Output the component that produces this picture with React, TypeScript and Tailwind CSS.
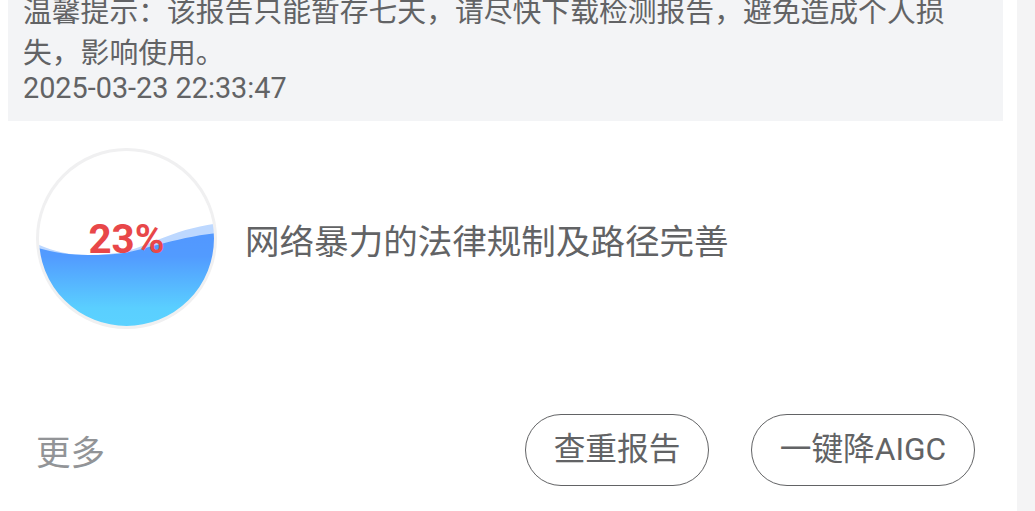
function WaterGauge({ value }: { value: number }) {
  return (
    <div className="grid h-[181px] w-[181px] shrink-0 place-items-center">
      <svg viewBox="0 0 181 181" className="col-start-1 row-start-1 h-[181px] w-[181px]">
        <defs>
          <linearGradient id="water" x1="0" y1="85" x2="0" y2="179" gradientUnits="userSpaceOnUse">
            <stop offset="0.05" stopColor="#5298ff" />
            <stop offset="0.25" stopColor="#529bff" />
            <stop offset="0.8" stopColor="#5acfff" />
            <stop offset="1" stopColor="#5bd2ff" />
          </linearGradient>
          <clipPath id="bowl">
            <circle cx="90.5" cy="90.5" r="88.5" />
          </clipPath>
        </defs>
        <circle cx="90.5" cy="90.5" r="89" fill="#fff" />
        <g clipPath="url(#bowl)">
          <path
            d="M0 95.5 C17 103.5 34 107 52 107 C66 107 79 106 92 102.8 C103 100 112 95.5 122 91.8 C140 84.5 160 78 181 75.5 V181 H0 Z"
            fill="#bdd8ff"
          />
          <path
            d="M0 99.5 C16 104.5 34 107 52 107 C66 107 79 106.5 92 104.2 C102 102.5 112 99 122 96.8 C140 92 160 87 181 85 V181 H0 Z"
            fill="url(#water)"
          />
        </g>
        <circle cx="90.5" cy="90.5" r="89" fill="none" stroke="#f0f0f1" strokeWidth="3" />
      </svg>
      <span className="col-start-1 row-start-1 pt-[3px] text-[40.3px] leading-none font-bold text-[#e84749]">
        {value}%
      </span>
    </div>
  );
}

function PillButton({ label, width }: { label: string; width: string }) {
  return (
    <button
      className={`${width} h-[72px] rounded-full border border-[#626365] text-center text-[31.68px] leading-none whitespace-nowrap text-[#626365]`}
    >
      {label}
    </button>
  );
}

export default function App() {
  return (
    <div className="h-[511px] overflow-hidden bg-[#f4f4f5] pr-[18px] font-[Roboto,'Noto_Sans_CJK_SC',sans-serif] text-[#626365]">
      <main className="flex h-full flex-col bg-white pl-2">
        <section className="flex h-[121px] w-[995px] shrink-0 flex-col justify-end bg-[#f3f4f6] pb-[17px] pl-[15px] text-[28.8px]">
          <p className="leading-[40.5px]">
            温馨提示：该报告只能暂存七天，请尽快下载检测报告，避免造成个人损
            <br />
            失，影响使用。
          </p>
          <time className="leading-[31px]">2025-03-23 22:33:47</time>
        </section>
        <section className="mt-[27px] flex items-center gap-[28px] pl-[28px]">
          <WaterGauge value={23} />
          <h1 className="pt-[8px] text-[34.56px] leading-none whitespace-nowrap">网络暴力的法律规制及路径完善</h1>
        </section>
        <footer className="mt-[85px] flex h-[72px] items-center pr-[42px] pl-[28px]">
          <span className="mr-auto pt-[6px] text-[34.56px] leading-none text-[#929497]">更多</span>
          <div className="flex gap-[42px]">
            <PillButton label="查重报告" width="w-[184px]" />
            <PillButton label="一键降AIGC" width="w-[224px]" />
          </div>
        </footer>
      </main>
    </div>
  );
}
